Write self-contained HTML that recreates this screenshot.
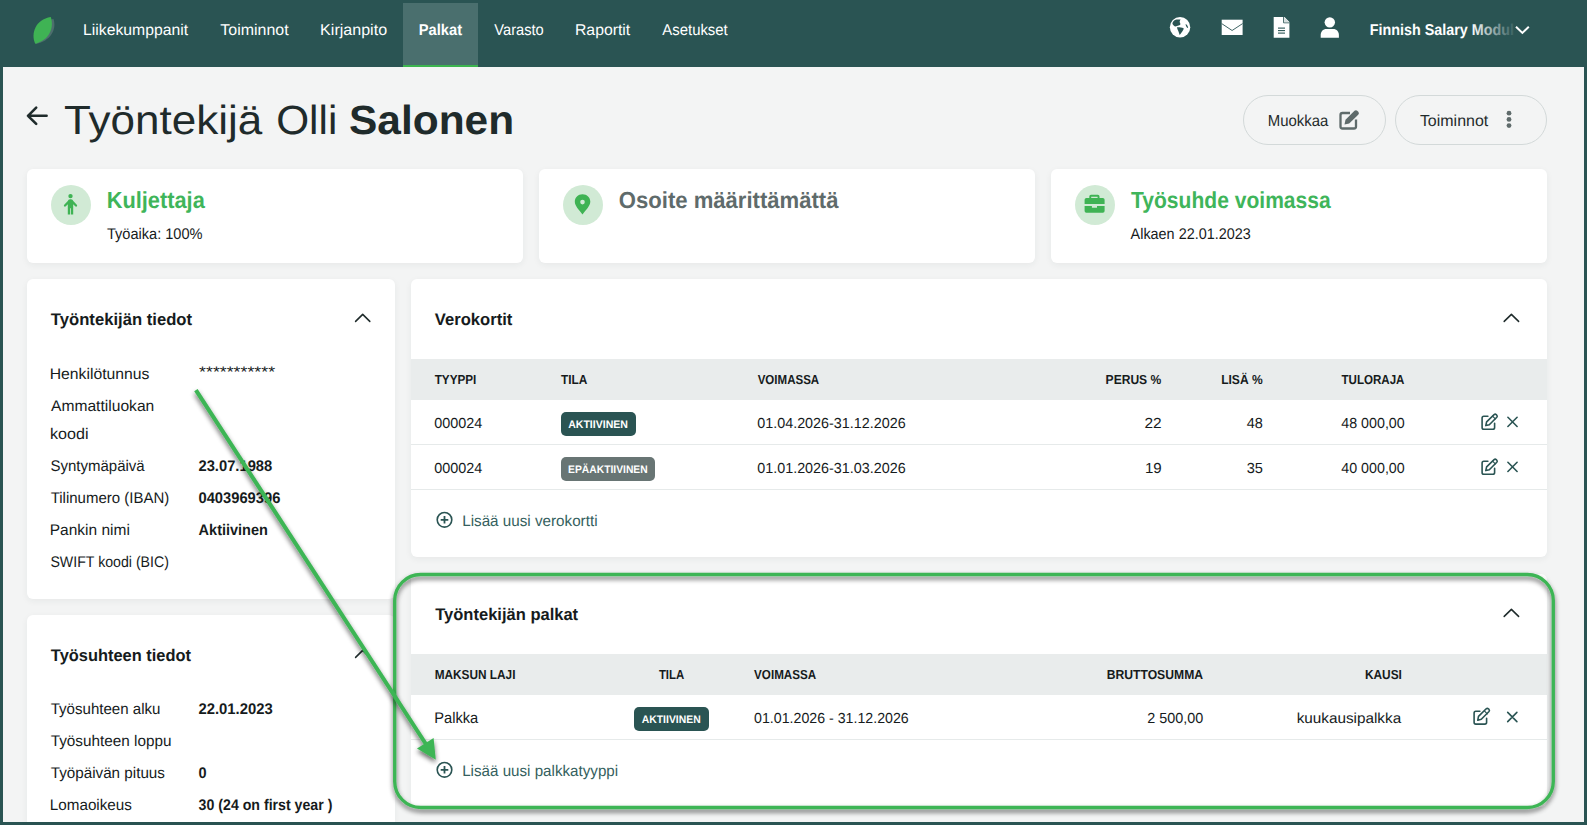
<!DOCTYPE html>
<html><head><meta charset="utf-8">
<style>
html,body{margin:0;padding:0;}
body{width:1587px;height:825px;overflow:hidden;background:#2a5453;position:relative;font-family:"Liberation Sans",sans-serif;}
.a{position:absolute;}
#content{left:3px;top:67px;width:1581px;height:755px;background:#f3f4f4;}
#tab{left:403px;top:3px;width:75px;height:64px;background:#4a6f6e;}
#tabline{left:403px;top:65px;width:75px;height:2px;background:#3cb44f;}
.card{background:#fff;border-radius:6px;box-shadow:0 2px 7px rgba(30,50,50,0.06);}
.btn{border:1px solid #d3d9d9;border-radius:25px;background:#f3f4f4;box-sizing:border-box;}
.circ{border-radius:50%;background:#d1ead5;}
.th{background:#e9ecec;}
.hr{height:1px;background:#e6eaea;}
.badge{border-radius:5px;}
svg{position:absolute;left:0;top:0;}
</style></head><body>
<div class="a" id="content"></div>
<div class="a" id="tab"></div>
<div class="a" id="tabline"></div>

<!-- buttons -->
<div class="a btn" style="left:1243px;top:95px;width:143px;height:50px;"></div>
<div class="a btn" style="left:1395px;top:95px;width:152px;height:50px;"></div>

<!-- info cards -->
<div class="a card" style="left:27px;top:169px;width:496px;height:94px;"></div>
<div class="a card" style="left:539px;top:169px;width:496px;height:94px;"></div>
<div class="a card" style="left:1051px;top:169px;width:496px;height:94px;"></div>
<div class="a circ" style="left:51px;top:185px;width:40px;height:40px;"></div>
<div class="a circ" style="left:563px;top:185px;width:40px;height:40px;"></div>
<div class="a circ" style="left:1075px;top:185px;width:40px;height:40px;"></div>

<!-- left cards -->
<div class="a card" style="left:27px;top:279px;width:368px;height:320px;"></div>
<div class="a card" style="left:27px;top:615px;width:368px;height:207px;border-bottom-left-radius:0;border-bottom-right-radius:0;"></div>

<!-- verokortit -->
<div class="a card" style="left:411px;top:279px;width:1136px;height:278px;"></div>
<div class="a th" style="left:411px;top:359px;width:1136px;height:41px;"></div>
<div class="a hr" style="left:411px;top:444px;width:1136px;"></div>
<div class="a hr" style="left:411px;top:489px;width:1136px;"></div>
<div class="a badge" style="left:561px;top:412px;width:75px;height:24px;background:#2a5453;"></div>
<div class="a badge" style="left:561px;top:457px;width:94px;height:24px;background:#687574;"></div>

<!-- palkat -->
<div class="a card" style="left:411px;top:574px;width:1136px;height:233px;"></div>
<div class="a th" style="left:411px;top:654px;width:1136px;height:41px;"></div>
<div class="a hr" style="left:411px;top:739px;width:1136px;"></div>
<div class="a badge" style="left:634px;top:707px;width:75px;height:24px;background:#2a5453;"></div>

<svg width="1587" height="825" viewBox="0 0 1587 825" style="font-family:'Liberation Sans',sans-serif;" text-rendering="geometricPrecision">
<defs>
<linearGradient id="fade" x1="1370" y1="0" x2="1514" y2="0" gradientUnits="userSpaceOnUse">
<stop offset="0" stop-color="#fff"/><stop offset="0.7" stop-color="#fff"/><stop offset="1" stop-color="#fff" stop-opacity="0.08"/>
</linearGradient>
<filter id="sh" x="-20%" y="-20%" width="140%" height="140%">
<feGaussianBlur in="SourceAlpha" stdDeviation="2.5"/><feOffset dx="0.4" dy="2.6" result="b"/>
<feComponentTransfer><feFuncA type="linear" slope="0.6"/></feComponentTransfer>
<feMerge><feMergeNode/><feMergeNode in="SourceGraphic"/></feMerge>
</filter>
</defs>

<!-- logo leaf -->
<path d="M36,44 C31,34 37,21 53.5,19 C57,30 50,41 36,44 Z" fill="#4d6e6d"/>
<path d="M35.2,43.7 C30.5,33.5 35.5,19.5 50.8,17 C54.5,28.5 48.5,40.5 35.2,43.7 Z" fill="#3fb354"/>

<!-- header icons -->
<g fill="#fff">
<circle cx="1180.05" cy="27.3" r="10.2"/>
</g>
<path d="M1172.4,23.6 C1172.6,21.4 1174.2,19.8 1176.5,19.4 L1180.6,19.4 C1179.9,20.5 1179.5,21.6 1179.8,22.4 C1180.3,23.2 1180.6,24.1 1180.2,24.8 C1179.2,25.5 1178,25.6 1177,25.9 C1176.3,26.2 1175.7,26.5 1175,26.4 C1173.6,25.8 1172.5,24.8 1172.4,23.6 Z M1176.9,27.2 C1178.6,27 1181.5,27.3 1183.7,28.2 C1183.6,29.8 1182.6,31 1181.9,32 C1181.2,33.1 1180.5,34.1 1179.7,34.9 C1179.1,33.6 1178.7,32.3 1178.3,31.1 C1177.8,29.8 1177.1,28.6 1176.9,27.2 Z M1185.6,23.9 C1186.8,24.2 1188.2,26.2 1188.1,28.1 C1186.9,27.8 1185.7,25.8 1185.6,23.9 Z" fill="#2a5453"/>
<rect x="1221.7" y="19.7" width="20.9" height="15.3" fill="#fff"/>
<path d="M1221.7,23.6 L1232.1,30.5 L1242.6,23.6" fill="none" stroke="#2a5453" stroke-width="0.9"/>
<path d="M1273.7,17 L1284.5,17 L1289.4,22 L1289.4,37.8 L1273.7,37.8 Z" fill="#fff"/>
<path d="M1283.6,17 L1283.6,22.8 L1289.4,22.8" fill="none" stroke="#2a5453" stroke-width="0.9"/><path d="M1284.2,17.6 L1289,22.3 L1284.2,22.3 Z" fill="#d6dede"/>
<g stroke="#2a5453" stroke-width="1.1"><line x1="1278" y1="28.1" x2="1285" y2="28.1"/><line x1="1278" y1="30.6" x2="1285" y2="30.6"/><line x1="1278" y1="33.1" x2="1285" y2="33.1"/></g>
<circle cx="1329.8" cy="22.35" r="5.2" fill="#fff"/>
<path d="M1320.7,37.8 L1320.7,35 C1320.7,31.5 1322.8,28.9 1326.5,28.9 L1333.1,28.9 C1336.8,28.9 1338.9,31.5 1338.9,35 L1338.9,37.8 Z" fill="#fff"/>
<path d="M1516,26.7 L1522.4,32.9 L1528.8,26.7" fill="none" stroke="#fff" stroke-width="2"/>

<!-- back arrow -->
<path d="M46.6,115.8 L28,115.8 M36.2,107.7 L28,115.8 L36.2,123.9" fill="none" stroke="#1f2b2b" stroke-width="2.6" stroke-linecap="round" stroke-linejoin="round"/>

<!-- button icons -->
<path d="M1350,113 L1342.5,113 Q1340.5,113 1340.5,115 L1340.5,126.5 Q1340.5,128.5 1342.5,128.5 L1354,128.5 Q1356,128.5 1356,126.5 L1356,119.5" fill="none" stroke="#5f6b6b" stroke-width="2.3"/>
<path d="M1344.5,124.5 L1345.5,119.8 L1354.5,110.8 Q1356,109.5 1357.5,111 L1358.5,112 Q1359.5,113.5 1358.2,114.8 L1349.2,123.5 Z" fill="#5f6b6b"/>
<g fill="#5f6b6b"><circle cx="1509" cy="113.2" r="2.4"/><circle cx="1509" cy="119.4" r="2.4"/><circle cx="1509" cy="125.6" r="2.4"/></g>

<!-- card icons -->
<g fill="#3fb354">
<circle cx="70.5" cy="196.1" r="2.2"/>
<path d="M67.8,201 Q68.2,199.2 70,199.2 L71,199.2 Q72.8,199.2 73.3,201 L77,205 Q77.5,206.1 76.6,206.6 Q75.8,207 75.2,206.3 L73.2,204.2 L73.2,214.4 L70.9,214.4 L70.9,208.2 L70.1,208.2 L70.1,214.4 L67.8,214.4 L67.8,204.2 L65.8,206.3 Q65.2,207 64.4,206.6 Q63.5,206.1 64,205 Z"/>
<path d="M582.5,194.2 C578,194.2 574.8,197.5 574.8,201.6 C574.8,206 579,210 582.5,214.4 C586,210 590.3,206 590.3,201.6 C590.3,197.5 587,194.2 582.5,194.2 Z M582.5,199.8 A2.3,2.3 0 1 0 582.5,204.4 A2.3,2.3 0 1 0 582.5,199.8 Z" fill-rule="evenodd"/>
<path d="M1089.3,198 L1089.3,196.5 Q1089.3,194.75 1091,194.75 L1097.8,194.75 Q1099.5,194.75 1099.5,196.5 L1099.5,198 L1097.6,198 L1097.6,196.7 L1091.2,196.7 L1091.2,198 Z"/>
<path d="M1086.4,198 L1102.8,198 Q1104.6,198 1104.6,199.8 L1104.6,203.9 L1084.6,203.9 L1084.6,199.8 Q1084.6,198 1086.4,198 Z"/>
<path d="M1084.6,206 L1091.9,206 L1091.9,207.8 L1097,207.8 L1097,206 L1104.6,206 L1104.6,211 Q1104.6,212.7 1102.9,212.7 L1086.3,212.7 Q1084.6,212.7 1084.6,211 Z"/>
</g>

<!-- chevrons -->
<g fill="none" stroke="#1f2b2b" stroke-width="1.55" stroke-linecap="round" stroke-linejoin="round">
<path d="M355.6,321.4 L362.7,314.4 L369.8,321.4"/>
<path d="M355.6,657.4 L362.7,650.4 L369.8,657.4"/>
<path d="M1504.2,321.4 L1511.4,314.4 L1518.6,321.4"/>
<path d="M1504.2,616.4 L1511.4,609.4 L1518.6,616.4"/>
</g>

<!-- table icons -->
<defs>
<g id="edi" fill="none" stroke="#2a5453" stroke-width="1.6" stroke-linecap="round" stroke-linejoin="round">
<path d="M1487.9,416.3 L1483.8,416.3 Q1482.1,416.3 1482.1,418 L1482.1,427.4 Q1482.1,429.2 1483.8,429.2 L1492.8,429.2 Q1494.6,429.2 1494.6,427.4 L1494.6,423.3"/>
<path d="M1485.8,425.6 L1486.6,421.9 L1494.1,414.6 Q1495.2,413.7 1496.2,414.6 L1496.8,415.2 Q1497.7,416.3 1496.8,417.3 L1489.3,424.7 Z"/>
<path d="M1492.6,416.2 L1495.3,418.9" stroke-width="1.2"/>
<path d="M1507.9,417.3 L1517.1,426.5 M1517.1,417.3 L1507.9,426.5"/>
</g>
</defs>
<use href="#edi"/>
<use href="#edi" transform="translate(0,45)"/>
<path d="M1479.9,711.2 L1475.8,711.2 Q1474.1,711.2 1474.1,712.9 L1474.1,722.3 Q1474.1,724.1 1475.8,724.1 L1484.8,724.1 Q1486.6,724.1 1486.6,722.3 L1486.6,718.2 M1477.8,720.2 L1478.5,716.4 L1486.2,708.8 Q1487.3,707.8 1488.4,708.8 L1489,709.4 Q1489.9,710.5 1489,711.5 L1481.3,719.2 Z M1507.7,712.4 L1516.9,721.6 M1516.9,712.4 L1507.7,721.6" fill="none" stroke="#2a5453" stroke-width="1.6" stroke-linecap="round" stroke-linejoin="round"/>
<path d="M1484.6,711.1 L1487.3,713.8" fill="none" stroke="#2a5453" stroke-width="1.2" stroke-linecap="round"/>

<!-- add links -->
<g fill="none" stroke="#2a5453" stroke-width="1.6">
<circle cx="444.5" cy="519.8" r="7.3"/>
<path d="M444.5,516 L444.5,523.6 M440.7,519.8 L448.3,519.8" stroke-width="1.8"/>
<circle cx="444.5" cy="769.8" r="7.3"/>
<path d="M444.5,766 L444.5,773.6 M440.7,769.8 L448.3,769.8" stroke-width="1.8"/>
</g>

<text x="83.14" y="34.90" font-size="15.70" font-weight="normal" fill="#ffffff" textLength="104.92" lengthAdjust="spacingAndGlyphs">Liikekumppanit</text>
<text x="220.38" y="34.90" font-size="15.70" font-weight="normal" fill="#ffffff" textLength="68.28" lengthAdjust="spacingAndGlyphs">Toiminnot</text>
<text x="320.11" y="34.90" font-size="15.70" font-weight="normal" fill="#ffffff" textLength="66.97" lengthAdjust="spacingAndGlyphs">Kirjanpito</text>
<text x="418.82" y="34.90" font-size="15.70" font-weight="bold" fill="#ffffff" textLength="43.22" lengthAdjust="spacingAndGlyphs">Palkat</text>
<text x="494.30" y="34.90" font-size="15.70" font-weight="normal" fill="#ffffff" textLength="49.43" lengthAdjust="spacingAndGlyphs">Varasto</text>
<text x="574.94" y="34.90" font-size="15.70" font-weight="normal" fill="#ffffff" textLength="55.33" lengthAdjust="spacingAndGlyphs">Raportit</text>
<text x="662.30" y="34.90" font-size="15.70" font-weight="normal" fill="#ffffff" textLength="65.47" lengthAdjust="spacingAndGlyphs">Asetukset</text>
<text x="1369.84" y="34.90" font-size="15.70" font-weight="bold" fill="url(#fade)" textLength="144.13" lengthAdjust="spacingAndGlyphs">Finnish Salary Modul</text>
<text x="64.12" y="134.00" font-size="40.70" font-weight="normal" fill="#1f2b2b" textLength="198.21" lengthAdjust="spacingAndGlyphs">Työntekijä</text>
<text x="276.21" y="134.00" font-size="40.70" font-weight="normal" fill="#1f2b2b" textLength="61.12" lengthAdjust="spacingAndGlyphs">Olli</text>
<text x="348.95" y="134.00" font-size="40.70" font-weight="bold" fill="#1f2b2b" textLength="165.23" lengthAdjust="spacingAndGlyphs">Salonen</text>
<text x="1267.70" y="125.80" font-size="15.99" font-weight="normal" fill="#1f2b2b" textLength="60.64" lengthAdjust="spacingAndGlyphs">Muokkaa</text>
<text x="1419.88" y="125.80" font-size="15.99" font-weight="normal" fill="#1f2b2b" textLength="68.38" lengthAdjust="spacingAndGlyphs">Toiminnot</text>
<text x="106.69" y="207.80" font-size="23.26" font-weight="bold" fill="#3fb55a" textLength="98.11" lengthAdjust="spacingAndGlyphs">Kuljettaja</text>
<text x="106.91" y="238.80" font-size="15.41" font-weight="normal" fill="#161b1c" textLength="95.62" lengthAdjust="spacingAndGlyphs">Työaika: 100%</text>
<text x="618.82" y="208.00" font-size="23.26" font-weight="bold" fill="#5f6b6b" textLength="219.70" lengthAdjust="spacingAndGlyphs">Osoite määrittämättä</text>
<text x="1130.99" y="207.90" font-size="23.26" font-weight="bold" fill="#3fb55a" textLength="199.72" lengthAdjust="spacingAndGlyphs">Työsuhde voimassa</text>
<text x="1130.60" y="238.60" font-size="15.41" font-weight="normal" fill="#161b1c" textLength="120.12" lengthAdjust="spacingAndGlyphs">Alkaen 22.01.2023</text>
<text x="50.83" y="324.50" font-size="16.86" font-weight="bold" fill="#161b1c" textLength="141.22" lengthAdjust="spacingAndGlyphs">Työntekijän tiedot</text>
<text x="49.74" y="378.90" font-size="15.41" font-weight="normal" fill="#161b1c" textLength="99.73" lengthAdjust="spacingAndGlyphs">Henkilötunnus</text>
<text x="199.12" y="377.00" font-size="15.40" font-weight="normal" fill="#161b1c" textLength="75.94" lengthAdjust="spacingAndGlyphs">***********</text>
<text x="51.00" y="410.80" font-size="15.41" font-weight="normal" fill="#161b1c" textLength="103.28" lengthAdjust="spacingAndGlyphs">Ammattiluokan</text>
<text x="50.03" y="438.80" font-size="15.41" font-weight="normal" fill="#161b1c" textLength="38.57" lengthAdjust="spacingAndGlyphs">koodi</text>
<text x="50.40" y="470.70" font-size="15.41" font-weight="normal" fill="#161b1c" textLength="94.34" lengthAdjust="spacingAndGlyphs">Syntymäpäivä</text>
<text x="198.46" y="470.70" font-size="15.41" font-weight="bold" fill="#161b1c" textLength="73.83" lengthAdjust="spacingAndGlyphs">23.07.1988</text>
<text x="50.70" y="502.70" font-size="15.41" font-weight="normal" fill="#161b1c" textLength="118.59" lengthAdjust="spacingAndGlyphs">Tilinumero (IBAN)</text>
<text x="198.46" y="502.70" font-size="15.41" font-weight="bold" fill="#161b1c" textLength="81.87" lengthAdjust="spacingAndGlyphs">0403969396</text>
<text x="49.76" y="534.60" font-size="15.41" font-weight="normal" fill="#161b1c" textLength="80.10" lengthAdjust="spacingAndGlyphs">Pankin nimi</text>
<text x="198.61" y="534.60" font-size="15.41" font-weight="bold" fill="#161b1c" textLength="69.27" lengthAdjust="spacingAndGlyphs">Aktiivinen</text>
<text x="50.43" y="566.60" font-size="15.41" font-weight="normal" fill="#161b1c" textLength="118.51" lengthAdjust="spacingAndGlyphs">SWIFT koodi (BIC)</text>
<text x="50.84" y="661.00" font-size="16.86" font-weight="bold" fill="#161b1c" textLength="140.11" lengthAdjust="spacingAndGlyphs">Työsuhteen tiedot</text>
<text x="50.70" y="714.40" font-size="15.41" font-weight="normal" fill="#161b1c" textLength="109.80" lengthAdjust="spacingAndGlyphs">Työsuhteen alku</text>
<text x="198.45" y="714.40" font-size="15.41" font-weight="bold" fill="#161b1c" textLength="74.28" lengthAdjust="spacingAndGlyphs">22.01.2023</text>
<text x="50.69" y="746.20" font-size="15.41" font-weight="normal" fill="#161b1c" textLength="120.82" lengthAdjust="spacingAndGlyphs">Työsuhteen loppu</text>
<text x="50.70" y="778.00" font-size="15.41" font-weight="normal" fill="#161b1c" textLength="114.26" lengthAdjust="spacingAndGlyphs">Työpäivän pituus</text>
<text x="198.47" y="778.00" font-size="15.41" font-weight="bold" fill="#161b1c" textLength="8.06" lengthAdjust="spacingAndGlyphs">0</text>
<text x="49.78" y="810.00" font-size="15.41" font-weight="normal" fill="#161b1c" textLength="82.18" lengthAdjust="spacingAndGlyphs">Lomaoikeus</text>
<text x="198.62" y="810.00" font-size="15.41" font-weight="bold" fill="#161b1c" textLength="133.79" lengthAdjust="spacingAndGlyphs">30 (24 on first year )</text>
<text x="434.80" y="324.80" font-size="16.86" font-weight="bold" fill="#161b1c" textLength="77.55" lengthAdjust="spacingAndGlyphs">Verokortit</text>
<text x="434.68" y="384.10" font-size="13.08" font-weight="bold" fill="#161b1c" textLength="41.70" lengthAdjust="spacingAndGlyphs">TYYPPI</text>
<text x="560.98" y="384.10" font-size="13.08" font-weight="bold" fill="#161b1c" textLength="26.38" lengthAdjust="spacingAndGlyphs">TILA</text>
<text x="757.70" y="384.10" font-size="13.08" font-weight="bold" fill="#161b1c" textLength="61.46" lengthAdjust="spacingAndGlyphs">VOIMASSA</text>
<text x="1105.58" y="384.10" font-size="13.08" font-weight="bold" fill="#161b1c" textLength="55.66" lengthAdjust="spacingAndGlyphs">PERUS %</text>
<text x="1221.18" y="384.10" font-size="13.08" font-weight="bold" fill="#161b1c" textLength="41.45" lengthAdjust="spacingAndGlyphs">LISÄ %</text>
<text x="1341.48" y="384.10" font-size="13.08" font-weight="bold" fill="#161b1c" textLength="62.97" lengthAdjust="spacingAndGlyphs">TULORAJA</text>
<text x="434.37" y="427.80" font-size="14.54" font-weight="normal" fill="#161b1c" textLength="48.01" lengthAdjust="spacingAndGlyphs">000024</text>
<text x="757.27" y="427.80" font-size="14.54" font-weight="normal" fill="#161b1c" textLength="148.35" lengthAdjust="spacingAndGlyphs">01.04.2026-31.12.2026</text>
<text x="1144.53" y="427.80" font-size="14.54" font-weight="normal" fill="#161b1c" textLength="17.19" lengthAdjust="spacingAndGlyphs">22</text>
<text x="1246.81" y="427.80" font-size="14.54" font-weight="normal" fill="#161b1c" textLength="16.11" lengthAdjust="spacingAndGlyphs">48</text>
<text x="1341.31" y="427.80" font-size="14.54" font-weight="normal" fill="#161b1c" textLength="63.40" lengthAdjust="spacingAndGlyphs">48 000,00</text>
<text x="434.37" y="472.70" font-size="14.54" font-weight="normal" fill="#161b1c" textLength="48.01" lengthAdjust="spacingAndGlyphs">000024</text>
<text x="757.27" y="472.70" font-size="14.54" font-weight="normal" fill="#161b1c" textLength="148.35" lengthAdjust="spacingAndGlyphs">01.01.2026-31.03.2026</text>
<text x="1144.95" y="472.70" font-size="14.54" font-weight="normal" fill="#161b1c" textLength="16.75" lengthAdjust="spacingAndGlyphs">19</text>
<text x="1246.66" y="472.70" font-size="14.54" font-weight="normal" fill="#161b1c" textLength="16.27" lengthAdjust="spacingAndGlyphs">35</text>
<text x="1341.31" y="472.70" font-size="14.54" font-weight="normal" fill="#161b1c" textLength="63.40" lengthAdjust="spacingAndGlyphs">40 000,00</text>
<text x="568.19" y="427.80" font-size="11.05" font-weight="bold" fill="#ffffff" textLength="59.77" lengthAdjust="spacingAndGlyphs">AKTIIVINEN</text>
<text x="568.08" y="472.80" font-size="11.05" font-weight="bold" fill="#ffffff" textLength="79.56" lengthAdjust="spacingAndGlyphs">EPÄAKTIIVINEN</text>
<text x="462.18" y="526.00" font-size="15.41" font-weight="normal" fill="#355f5e" textLength="135.36" lengthAdjust="spacingAndGlyphs">Lisää uusi verokortti</text>
<text x="435.23" y="619.60" font-size="16.86" font-weight="bold" fill="#161b1c" textLength="142.91" lengthAdjust="spacingAndGlyphs">Työntekijän palkat</text>
<text x="434.69" y="678.90" font-size="13.08" font-weight="bold" fill="#161b1c" textLength="80.79" lengthAdjust="spacingAndGlyphs">MAKSUN LAJI</text>
<text x="658.89" y="678.90" font-size="13.08" font-weight="bold" fill="#161b1c" textLength="25.37" lengthAdjust="spacingAndGlyphs">TILA</text>
<text x="754.10" y="678.90" font-size="13.08" font-weight="bold" fill="#161b1c" textLength="62.06" lengthAdjust="spacingAndGlyphs">VOIMASSA</text>
<text x="1106.67" y="678.90" font-size="13.08" font-weight="bold" fill="#161b1c" textLength="96.40" lengthAdjust="spacingAndGlyphs">BRUTTOSUMMA</text>
<text x="1364.89" y="678.90" font-size="13.08" font-weight="bold" fill="#161b1c" textLength="37.00" lengthAdjust="spacingAndGlyphs">KAUSI</text>
<text x="434.23" y="722.80" font-size="15.41" font-weight="normal" fill="#161b1c" textLength="44.02" lengthAdjust="spacingAndGlyphs">Palkka</text>
<text x="641.79" y="723.20" font-size="11.05" font-weight="bold" fill="#ffffff" textLength="58.85" lengthAdjust="spacingAndGlyphs">AKTIIVINEN</text>
<text x="754.07" y="722.80" font-size="14.54" font-weight="normal" fill="#161b1c" textLength="154.64" lengthAdjust="spacingAndGlyphs">01.01.2026 - 31.12.2026</text>
<text x="1147.28" y="722.80" font-size="14.54" font-weight="normal" fill="#161b1c" textLength="56.04" lengthAdjust="spacingAndGlyphs">2 500,00</text>
<text x="1296.68" y="722.80" font-size="14.54" font-weight="normal" fill="#161b1c" textLength="104.46" lengthAdjust="spacingAndGlyphs">kuukausipalkka</text>
<text x="462.19" y="776.00" font-size="15.41" font-weight="normal" fill="#355f5e" textLength="155.96" lengthAdjust="spacingAndGlyphs">Lisää uusi palkkatyyppi</text>

<!-- annotation -->
<g filter="url(#sh)">
<rect x="394.7" y="574.5" width="1158.6" height="233" rx="26" ry="26" fill="none" stroke="#3db554" stroke-width="3.3"/>
</g>
<g filter="url(#sh)">
<path d="M195.9,390.1 L426.5,745" stroke="#3db554" stroke-width="4.1" fill="none" stroke-linecap="butt"/>
<path d="M435.8,759.7 L417,748.5 L433.6,737.9 Z" fill="#3db554"/>
</g>
</svg>
</body></html>
